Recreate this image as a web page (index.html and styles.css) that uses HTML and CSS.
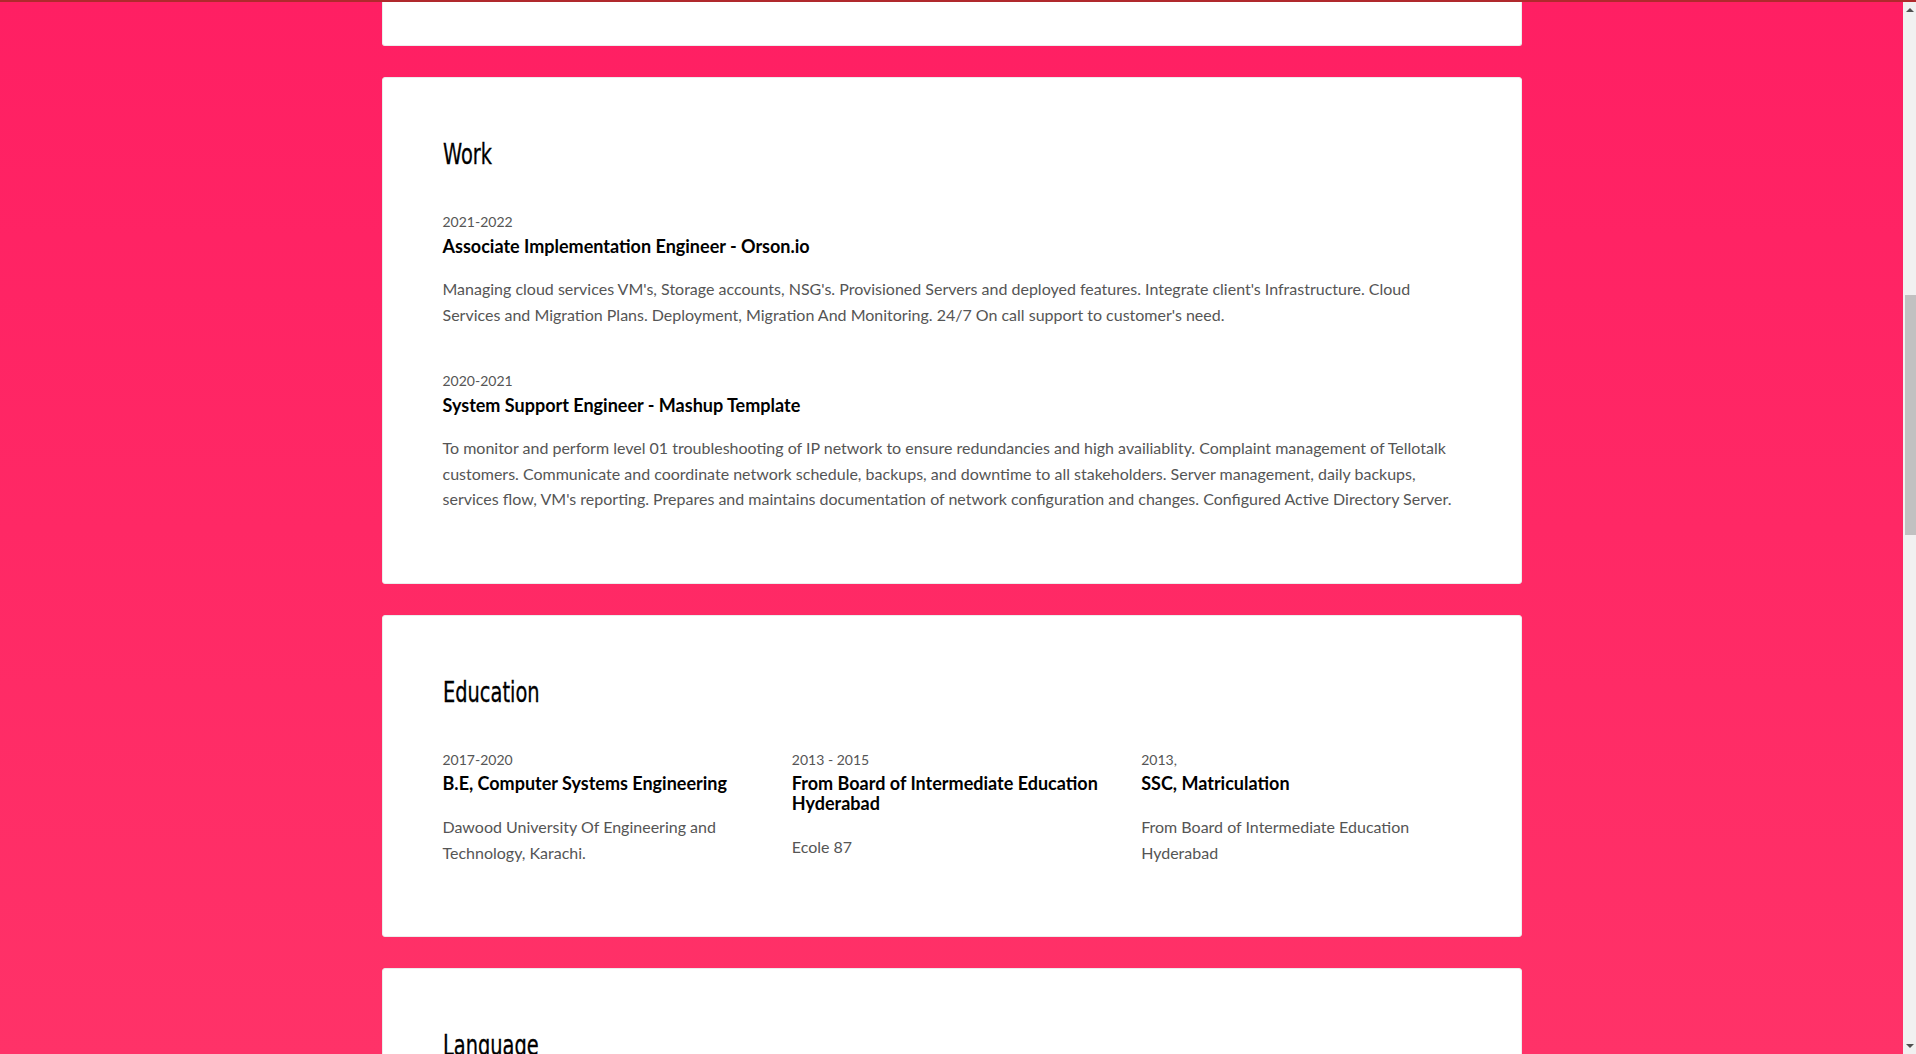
FILE: index.html
```html
<!DOCTYPE html>
<html lang="en">
<head>
<meta charset="utf-8">
<title>Resume</title>
<link rel="stylesheet" href="styles.css">
</head>
<body>
<div class="topline"></div>
<div class="window">
  <main class="page">
    <div class="container">
      <section class="card card-stub"></section>

      <section class="card">
        <h2 class="section-title"><span>Work</span></h2>
        <div class="item">
          <div class="date">2021-2022</div>
          <h3 class="item-title">Associate Implementation Engineer - Orson.io</h3>
          <p class="desc">Managing cloud services VM's, Storage accounts, NSG's. Provisioned Servers and deployed features. Integrate client's Infrastructure. Cloud Services and Migration Plans. Deployment, Migration And Monitoring. 24/7 On call support to customer's need.</p>
        </div>
        <div class="item">
          <div class="date">2020-2021</div>
          <h3 class="item-title">System Support Engineer - Mashup Template</h3>
          <p class="desc">To monitor and perform level 01 troubleshooting of IP network to ensure redundancies and high availiablity. Complaint management of Tellotalk customers. Communicate and coordinate network schedule, backups, and downtime to all stakeholders. Server management, daily backups, services flow, VM's reporting. Prepares and maintains documentation of network configuration and changes. Configured Active Directory Server.</p>
        </div>
      </section>

      <section class="card">
        <h2 class="section-title"><span>Education</span></h2>
        <div class="edu-grid">
          <div class="item">
            <div class="date">2017-2020</div>
            <h3 class="item-title">B.E, Computer Systems Engineering</h3>
            <p class="desc">Dawood University Of Engineering and Technology, Karachi.</p>
          </div>
          <div class="item">
            <div class="date">2013 - 2015</div>
            <h3 class="item-title">From Board of Intermediate Education Hyderabad</h3>
            <p class="desc">Ecole 87</p>
          </div>
          <div class="item">
            <div class="date">2013,</div>
            <h3 class="item-title">SSC, Matriculation</h3>
            <p class="desc">From Board of Intermediate Education Hyderabad</p>
          </div>
        </div>
      </section>

      <section class="card">
        <h2 class="section-title"><span>Language</span></h2>
      </section>
    </div>
  </main>
  <div class="scrollbar">
    <span class="arrow arrow-up"></span>
    <div class="track"><div class="thumb"></div></div>
    <span class="arrow arrow-down"></span>
  </div>
</div>
</body>
</html>
```

FILE: styles.css
```css
* { box-sizing: border-box; }

html, body {
  margin: 0;
  padding: 0;
  height: 100%;
  overflow: hidden;
}

body {
  display: flex;
  flex-direction: column;
  font-family: Lato, "Open Sans", sans-serif;
  background: #ff2064;
}

.topline {
  height: 2px;
  flex: 0 0 2px;
  background: #b0292d;
}

.window {
  flex: 1;
  display: flex;
  min-height: 0;
}

.page {
  flex: 1;
  overflow: hidden;
  background: linear-gradient(to bottom, #ff1f63 0%, #ff2865 50%, #ff3268 100%);
}

.container {
  width: 1140px;
  margin: 0 auto;
  display: flex;
  flex-direction: column;
  gap: 31px;
}

.card {
  background: #fff;
  border: 1px solid #ececec;
  border-radius: 3px;
  padding: 60px 60px 59px;
}

.card-stub {
  height: 44px;
  padding: 0;
  border-top: none;
  border-radius: 0 0 3px 3px;
}

.section-title {
  margin: 0 0 41px;
  font-family: "Liberation Sans Narrow", "DejaVu Sans Condensed", "DejaVu Sans", sans-serif;
  font-weight: 400;
  font-size: 28px;
  line-height: 34px;
  color: #000;
}

.section-title span {
  display: inline-block;
  transform: scaleX(0.77);
  transform-origin: left center;
  -webkit-text-stroke: 0.3px #000;
}

.item + .item { margin-top: 45px; }

.date {
  font-size: 14px;
  line-height: 17px;
  color: #555;
  margin-bottom: 5.5px;
}

.item-title {
  margin: 0 0 20.5px;
  font-size: 18px;
  line-height: 20px;
  font-weight: 700;
  color: #000;
}

.desc {
  margin: 0 0 12px;
  font-size: 16px;
  line-height: 25.6px;
  color: #555;
}

.edu-grid {
  display: grid;
  grid-template-columns: repeat(3, 1fr);
  column-gap: 30px;
}

.edu-grid .item + .item { margin-top: 0; }

.scrollbar {
  flex: 0 0 13px;
  width: 13px;
  background: #f1f1f1;
  display: flex;
  flex-direction: column;
  align-items: center;
}

.arrow {
  flex: 0 0 auto;
  width: 0;
  height: 0;
  border-left: 4px solid transparent;
  border-right: 4px solid transparent;
}

.arrow-up {
  margin: 6px 0 5px;
  border-bottom: 4px solid #505050;
}

.arrow-down {
  margin: 5px 0 6px;
  border-top: 4px solid #505050;
}

.track {
  flex: 1;
  width: 100%;
  padding: 278px 0 0 2px;
}

.thumb {
  width: 11px;
  height: 240px;
  background: #c1c1c1;
}
```
